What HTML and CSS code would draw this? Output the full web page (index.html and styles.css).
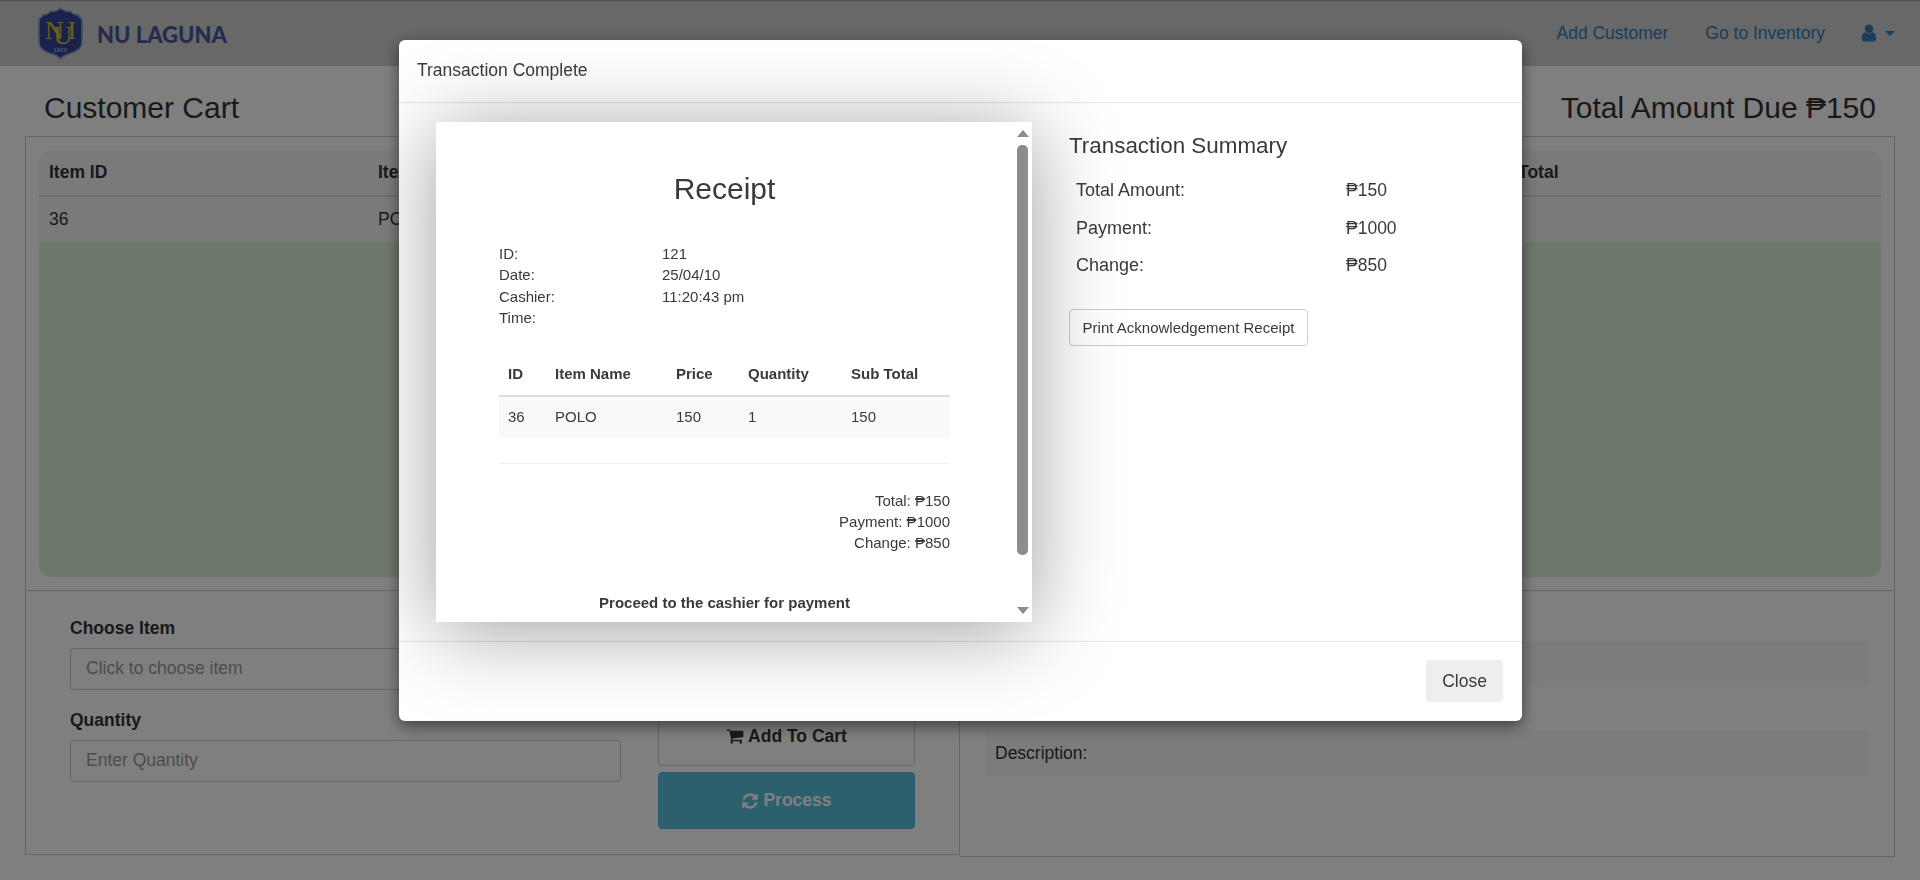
FILE: index.html
```html
<!DOCTYPE html>
<html lang="en">
<head>
<meta charset="utf-8">
<title>Customer Cart</title>
<link rel="stylesheet" href="styles.css">
</head>
<body>
<header class="navbar">
  <div class="brand">
    <svg class="logo" viewBox="0 0 45 53" aria-hidden="true">
      <path class="shield-edge" d="M22.5 0 C25 3 29 4.500 33 3.500 C34.500 6 37.500 7.500 40.500 7 C41.500 9.500 43 10.500 44.500 11 C45 20 45 30 44.500 37 C44 42 38 46 30 48 C27 49 24.500 50.500 22.500 53 C20.500 50.500 18 49 15 48 C7 46 1 42 .5 37 C0 30 0 20 .5 11 C2 10.500 3.500 9.500 4.500 7 C7.500 7.500 10.500 6 12 3.500 C16 4.500 20 3 22.500 0Z"/>
      <path class="shield-fill" d="M22.500 2 C25 4.500 29 5.500 32.500 5 C34 7.500 36.500 8.800 39.500 8.500 C40.500 10.500 41.500 11.500 43 12 C43.400 20 43.400 30 43 37 C42.500 41 37 44.500 29.500 46.500 C27 47.200 24.500 48.500 22.500 50.500 C20.500 48.500 18 47.200 15.500 46.500 C8 44.500 2.500 41 2 37 C1.600 30 1.600 20 2 12 C3.500 11.500 4.500 10.500 5.500 8.500 C8.500 8.800 11 7.500 12.500 5 C16 5.500 20 4.500 22.500 2Z"/>
      <text class="mono" x="7 15.500 29.500" y="32 37 32">NUI</text>
      <text class="year" x="22.500" y="45">1900</text>
    </svg>
    <span class="brand-name">NU LAGUNA</span>
  </div>
  <nav class="nav-links">
    <a class="nav-link">Add Customer</a>
    <a class="nav-link">Go to Inventory</a>
    <a class="nav-user">
      <svg class="icon-user" viewBox="0 0 1792 1792" aria-hidden="true"><path d="M1536 1399q0 109-62.500 187t-150.500 78h-854q-88 0-150.500-78t-62.500-187q0-85 8.500-160.500t31.500-152 58.500-131 94-89 134.500-34.500q131 128 313 128t313-128q76 0 134.500 34.500t94 89 58.500 131 31.500 152 8.500 160.500zm-256-887q0 159-112.500 271.500t-271.500 112.500-271.500-112.500-112.500-271.500 112.500-271.500 271.500-112.500 271.500 112.500 112.500 271.500z"/></svg>
      <span class="caret"></span>
    </a>
  </nav>
</header>

<main class="page">
  <div class="title-row">
    <h1 class="page-title">Customer Cart</h1>
    <h1 class="page-title">Total Amount Due ₱150</h1>
  </div>
  <section class="panel">
    <div class="cart">
      <table class="cart-table">
        <colgroup>
          <col class="c-id"><col class="c-name"><col class="c-price"><col class="c-qty"><col class="c-total">
        </colgroup>
        <thead>
          <tr><th>Item ID</th><th>Item Name</th><th>Price</th><th>Quantity</th><th>Total</th></tr>
        </thead>
        <tbody>
          <tr><td>36</td><td>POLO</td><td>150</td><td>1</td><td></td></tr>
        </tbody>
      </table>
      <div class="cart-fill"></div>
    </div>
    <div class="lower">
      <div class="order">
        <form class="order-form">
          <label class="field-label">Choose Item</label>
          <input class="field field-first" placeholder="Click to choose item">
          <label class="field-label">Quantity</label>
          <input class="field" placeholder="Enter Quantity">
        </form>
        <div class="order-actions">
          <button class="btn-add" type="button">
            <svg class="icon-inline" viewBox="0 0 1792 1792" aria-hidden="true"><path d="M704 1536q0 52-38 90t-90 38-90-38-38-90 38-90 90-38 90 38 38 90zm896 0q0 52-38 90t-90 38-90-38-38-90 38-90 90-38 90 38 38 90zm128-1088v512q0 24-16.500 42.500t-40.500 21.500l-1044 122q13 60 13 70 0 16-24 64h920q26 0 45 19t19 45-19 45-45 19h-1024q-26 0-45-19t-19-45q0-11 8-31.500t16-36 21.500-40 15.500-29.500l-177-823h-204q-26 0-45-19t-19-45 19-45 45-19h256q16 0 28.500 6.500t19.500 15.500 13 24.500 8 26 5.500 29.500 4.500 26h1201q26 0 45 19t19 45z"/></svg>
            Add To Cart
          </button>
          <button class="btn-process" type="button">
            <svg class="icon-inline" viewBox="0 0 1792 1792" aria-hidden="true"><path d="M1639 1056q0 5-1 7-64 268-268 434.500t-478 166.500q-146 0-282.500-55t-243.500-157l-129 129q-19 19-45 19t-45-19-19-45v-448q0-26 19-45t45-19h448q26 0 45 19t19 45-19 45l-137 137q71 66 161 102t187 36q134 0 250-65t186-179q11-17 53-117 8-23 30-23h192q13 0 22.500 9.500t9.500 22.500zm25-800v448q0 26-19 45t-45 19h-448q-26 0-45-19t-19-45 19-45l138-138q-148-137-349-137-134 0-250 65t-186 179q-11 17-53 117-8 23-30 23h-199q-13 0-22.500-9.500t-9.500-22.500v-7q65-268 270-434.500t480-166.500q146 0 284 55.500t245 156.500l130-129q19-19 45-19t45 19 19 45z"/></svg>
            Process
          </button>
        </div>
      </div>
      <div class="details">
        <div class="detail-row">Item ID:</div>
        <div class="detail-row detail-alt">Item Name:</div>
        <div class="detail-row">Price:</div>
        <div class="detail-row detail-alt">Description:</div>
      </div>
    </div>
  </section>
</main>

<div class="backdrop"></div>

<div class="modal" role="dialog">
  <div class="modal-header">Transaction Complete</div>
  <div class="modal-body">
    <div class="receipt">
      <h2 class="receipt-title">Receipt</h2>
      <div class="receipt-meta">
        <div>ID:<br>Date:<br>Cashier:<br>Time:</div>
        <div>121<br>25/04/10<br>11:20:43 pm</div>
      </div>
      <table class="receipt-table">
        <colgroup>
          <col class="r-id"><col class="r-name"><col class="r-price"><col class="r-qty"><col class="r-sub">
        </colgroup>
        <thead>
          <tr><th>ID</th><th>Item Name</th><th>Price</th><th>Quantity</th><th>Sub Total</th></tr>
        </thead>
        <tbody>
          <tr><td>36</td><td>POLO</td><td>150</td><td>1</td><td>150</td></tr>
        </tbody>
      </table>
      <hr class="receipt-rule">
      <div class="receipt-totals">Total: ₱150<br>Payment: ₱1000<br>Change: ₱850</div>
      <p class="receipt-note">Proceed to the cashier for payment</p>
      <div class="scrollbar">
        <span class="arrow-up"></span>
        <span class="thumb"></span>
        <span class="arrow-down"></span>
      </div>
    </div>
    <div class="summary">
      <h3 class="summary-title">Transaction Summary</h3>
      <dl class="summary-list">
        <dt>Total Amount:</dt><dd>₱150</dd>
        <dt>Payment:</dt><dd>₱1000</dd>
        <dt>Change:</dt><dd>₱850</dd>
      </dl>
      <button class="btn-print" type="button">Print Acknowledgement Receipt</button>
    </div>
  </div>
  <div class="modal-footer">
    <button class="btn-close" type="button">Close</button>
  </div>
</div>
</body>
</html>
```
FILE: styles.css
```css
* { box-sizing: border-box; }
html, body { margin: 0; height: 880px; overflow: hidden; }
body {
  background: #fff;
  color: #333;
  font-family: "Liberation Sans", Arial, sans-serif;
  font-size: 17.5px;
  line-height: 25px;
}

.navbar {
  height: 66px;
  display: flex;
  justify-content: space-between;
  align-items: center;
  background: #d0d0d0;
  border-top: 1px solid #a4a4a4;
  padding: 0 25px 0 38px;
}
.brand { display: flex; align-items: center; gap: 14px; }
.logo { width: 45px; height: 53px; display: block; }
.shield-edge { fill: #8d9bd0; }
.shield-fill { fill: #30449a; }
.mono { fill: #d9bd3f; font-family: "Liberation Serif", serif; font-size: 26px; }
.year { fill: #dfe2f0; font-family: "Liberation Sans", sans-serif; font-size: 5px; letter-spacing: .6px; text-anchor: middle; }
.brand-name { color: #46589e; font-family: Lato, sans-serif; font-weight: 900; font-size: 22px; line-height: 1; margin-top: 2px; }
.nav-links { display: flex; align-items: center; gap: 37px; margin-top: -1px; }
.nav-link, .nav-user { color: #337ab7; }
.nav-user { display: flex; align-items: center; gap: 6px; }
.icon-user { width: 20px; height: 20px; fill: #337ab7; display: block; margin-left: -3px; }
.caret { width: 0; height: 0; border-top: 5px solid #337ab7; border-left: 5px solid transparent; border-right: 5px solid transparent; }

.title-row {
  height: 70px;
  display: flex;
  justify-content: space-between;
  align-items: center;
  padding: 12px 44px 0 44px;
}
.page-title { margin: 0; font-size: 30px; font-weight: 400; line-height: 33px; }

.panel { margin: 0 25px; border-top: 1px solid #ccc; }
.cart { height: 454px; padding: 13px 13px 13px; border: 1px solid #ccc; border-top: 0; display: flex; flex-direction: column; }
.cart-table { width: 100%; border-collapse: separate; border-spacing: 0; table-layout: fixed; background: #f5f5f5; border-radius: 12px 12px 0 0; }
.c-id { width: 329px; }
.c-name { width: 390px; }
.c-price { width: 390px; }
.c-qty { width: 360px; }
.cart-table th { text-align: left; height: 47px; padding: 0 10px; border-bottom: 2px solid #ddd; font-weight: 700; }
.cart-table td { height: 45px; padding: 0 10px; }
.cart-fill { flex: 1; background: #dff0d8; border-radius: 0 0 12px 12px; }

.lower { display: grid; grid-template-columns: 935px 1fr; align-items: start; }
.order { height: 264px; display: grid; grid-template-columns: 551px 257px; column-gap: 37px; padding-left: 44px; border: 1px solid #ccc; border-top: 0; }
.order-form { padding-top: 25px; }
.field-label { display: block; font-weight: 700; height: 25px; margin-bottom: 6.500px; }
.field {
  display: block;
  width: 100%;
  height: 42.500px;
  padding: 0 15px;
  border: 1px solid #ccc;
  border-radius: 4px;
  background: #fff;
  font: inherit;
  color: #555;
}
.field::placeholder { color: #999; opacity: 1; }
.field-first { margin-bottom: 18px; }
.order-actions { padding-top: 115px; display: flex; flex-direction: column; gap: 6px; }
.btn-add, .btn-process {
  display: flex;
  align-items: center;
  justify-content: center;
  gap: 4px;
  width: 100%;
  border-radius: 4px;
  font: inherit;
  font-weight: 700;
  padding: 0;
}
.btn-add { height: 60px; background: #fff; border: 1px solid #ccc; color: #333; }
.btn-process { height: 57px; background: #5bc0de; border: 1px solid #46b8da; color: #fff; }
.icon-inline { width: 18px; height: 18px; fill: currentColor; display: block; }

.details { height: 266px; padding: 5px 26px 0 25px; border: 1px solid #ccc; border-width: 0 1px 1px 0; }
.detail-row { height: 45px; line-height: 45px; padding-left: 10px; }
.detail-alt { background: #f9f9f9; }

.backdrop { position: fixed; inset: 0; background: rgba(0, 0, 0, .5); }

.modal {
  position: fixed;
  top: 40px;
  left: 399px;
  width: 1123px;
  height: 681px;
  display: flex;
  flex-direction: column;
  background: #fff;
  color: #3a3a3a;
  border-radius: 6px;
  box-shadow: 0 5px 15px rgba(0, 0, 0, .5);
  overflow: hidden;
}
.modal-header { height: 63px; padding: 0 18px 2px; display: flex; align-items: center; border-bottom: 1px solid #e5e5e5; }
.modal-body { height: 538px; display: grid; grid-template-columns: 596px 1fr; column-gap: 37px; padding: 19px 37px; }
.modal-footer { flex: 1; display: flex; justify-content: flex-end; align-items: flex-start; padding: 18px 19px 0; border-top: 1px solid #e5e5e5; }
.btn-close { width: 77px; height: 42px; background: #eee; border: 0; border-radius: 4px; font: inherit; color: #3a3a3a; padding: 0; }

.receipt {
  position: relative;
  z-index: 1;
  height: 500px;
  overflow: hidden;
  padding: 50px 82px 0 63px;
  background: #fff;
  box-shadow: 0 8px 80px rgba(0, 0, 0, .38);
  font-size: 15px;
  line-height: 21.400px;
}
.receipt-title { margin: 0 0 38px; font-size: 30px; font-weight: 400; line-height: 33px; text-align: center; }
.receipt-meta { display: grid; grid-template-columns: 163px 1fr; }
.receipt-table { width: 100%; margin-top: 28px; border-collapse: collapse; table-layout: fixed; }
.r-id { width: 47px; }
.r-name { width: 121px; }
.r-price { width: 72px; }
.r-qty { width: 103px; }
.receipt-table th { height: 39px; padding: 0 9px 4px; text-align: left; border-bottom: 2px solid #ddd; font-weight: 700; }
.receipt-table td { height: 42px; padding: 0 9px; background: #f9f9f9; }
.receipt-rule { margin: 25px 0 26px; border: 0; border-top: 1px solid #eee; }
.receipt-totals { text-align: right; }
.receipt-note { margin: 38px 0 0; font-weight: 700; text-align: center; }

.scrollbar { position: absolute; top: 0; right: 0; bottom: 0; width: 19px; }
.thumb { position: absolute; top: 23px; right: 4px; width: 11px; height: 410px; background: #8c8c8c; border-radius: 5px; }
.arrow-up, .arrow-down { position: absolute; right: 3px; width: 0; height: 0; border-left: 6.500px solid transparent; border-right: 6.500px solid transparent; }
.arrow-up { top: 8px; border-bottom: 7px solid #8c8c8c; }
.arrow-down { bottom: 8px; border-top: 7px solid #8c8c8c; }

.summary { padding-top: 10px; }
.summary-title { margin: 0 0 13px; font-size: 22.400px; font-weight: 400; line-height: 27px; }
.summary-list { display: grid; grid-template-columns: 270px 1fr; grid-auto-rows: 37.500px; margin: 0 0 24px; padding-left: 7px; font-size: 17.5px; align-items: center; }
.summary-list dt { font-weight: 400; font-size: 18px; }
.summary-list dd { margin: 0; }
.btn-print { width: 239px; height: 37px; background: #fff; border: 1px solid #ccc; border-radius: 4px; font: inherit; font-size: 15px; color: #3a3a3a; padding: 0; }
```
